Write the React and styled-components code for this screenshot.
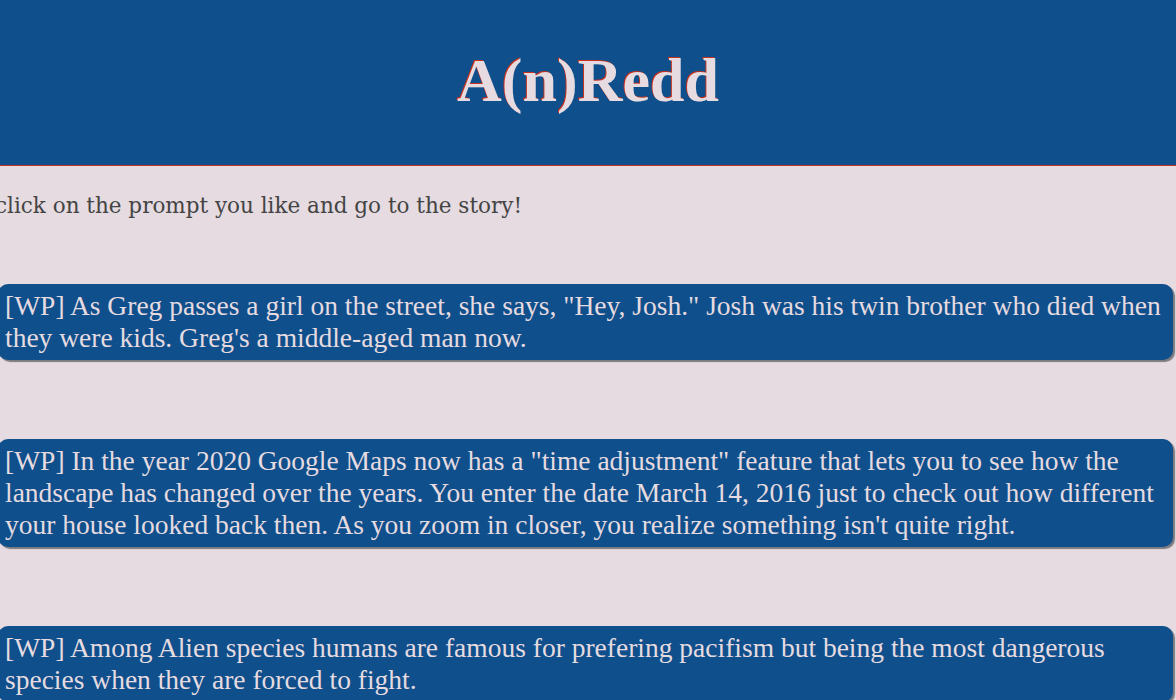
import React from 'react'
import styled, { createGlobalStyle } from 'styled-components';

const BLUE = '#0f4f8b';
const PINK = '#e5dbe0';

const GlobalStyle = createGlobalStyle`
    html, body {
        margin: 0;
        padding: 0;
        background: ${PINK};
        overflow: hidden;
    }
`;

const prompts = [
    `[WP] As Greg passes a girl on the street, she says, "Hey, Josh." Josh was his twin brother who died when they were kids. Greg's a middle-aged man now.`,
    `[WP] In the year 2020 Google Maps now has a "time adjustment" feature that lets you to see how the landscape has changed over the years. You enter the date March 14, 2016 just to check out how different your house looked back then. As you zoom in closer, you realize something isn't quite right.`,
    `[WP] Among Alien species humans are famous for prefering pacifism but being the most dangerous species when they are forced to fight.`,
];

const Header = styled.header`
    height: 165px;
    background: ${BLUE};
    border-bottom: 1px solid #c8321e;
    display: flex;
    align-items: center;
    justify-content: center;
`;

const Title = styled.h1`
    margin: 0 0 4px 0;
    font-family: "Liberation Serif", "Times New Roman", serif;
    font-size: 62px;
    font-weight: 700;
    color: ${PINK};
    text-shadow: -1px -1px 0 #c8321e;
`;

const Main = styled.main`
    padding: 0 3px 40px 0;
    margin-left: -2px;
`;

const Intro = styled.p`
    margin: 24px 0 62px -3px;
    font-family: "DejaVu Serif", Georgia, serif;
    font-size: 21.5px;
    color: #444;
    line-height: 32px;
`;

const PromptList = styled.div`
    display: flex;
    flex-direction: column;
    gap: 79px;
`;

const Prompt = styled.a`
    display: block;
    background: ${BLUE};
    color: ${PINK};
    border-radius: 10px;
    box-shadow: 2px 2px 1px #7a7a80;
    padding: 6px 6px 6px 7px;
    font-family: "Liberation Serif", "Times New Roman", serif;
    font-size: 27.5px;
    line-height: 32px;
    text-decoration: none;
    cursor: pointer;
`;

const App = () => {
    return (
        <>
            <GlobalStyle />
            <Header>
                <Title>A(n)Redd</Title>
            </Header>
            <Main>
                <Intro>click on the prompt you like and go to the story!</Intro>
                <PromptList>
                    {prompts.map((text, index) => (
                        <Prompt key={index}>{text}</Prompt>
                    ))}
                </PromptList>
            </Main>
        </>
    )
}

export default App
